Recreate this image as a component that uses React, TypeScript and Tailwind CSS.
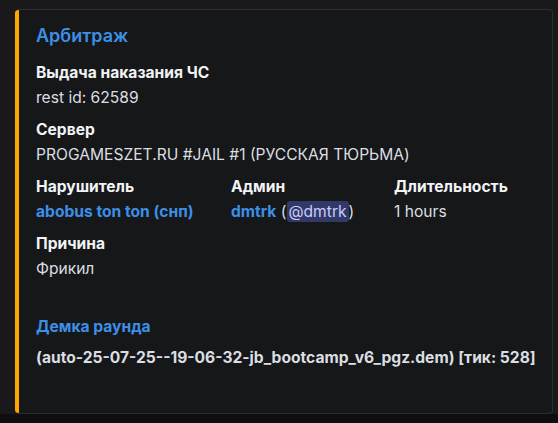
import React from "react";

const font = { fontFamily: 'Inter, "Noto Sans", "Liberation Sans", sans-serif' };

function Field({ name, children }: { name: string; children: React.ReactNode }) {
  return (
    <div className="flex flex-col">
      <div className="h-[25px] leading-[25px] text-[15.6px] font-bold text-[#f2f3f5]">{name}</div>
      <div className="h-[25px] leading-[25px] text-[15.6px] text-[#dbdee1]">{children}</div>
    </div>
  );
}

export default function App() {
  return (
    <div className="w-[558px] h-[423px] bg-[#0e0e10] overflow-hidden" style={font}>
      <div className="h-[414px] bg-[#19191c] pt-[9px] pl-[15px] pr-[5px]">
        <div className="flex h-[405px] rounded-[4px] overflow-hidden border border-[#2c2d31] border-l-0 bg-[#161719]">
          <div className="w-[4px] bg-[#ffa500] shrink-0" />
          <div className="flex flex-col pl-[17px] pt-[14px]">
            <div className="h-[24px] leading-[24px] text-[18px] font-semibold text-[#3d8fe6]">Арбитраж</div>
            <div className="mt-[12px] flex flex-col gap-[7px]">
              <Field name="Выдача наказания ЧС">rest id: 62589</Field>
              <Field name="Сервер">PROGAMESZET.RU #JAIL #1 (РУССКАЯ ТЮРЬМА)</Field>
              <div className="flex">
                <div className="w-[195px]">
                  <Field name="Нарушитель">
                    <span className="font-bold text-[#3d8fe6]">abobus ton ton (снп)</span>
                  </Field>
                </div>
                <div className="w-[163px]">
                  <Field name="Админ">
                    <span className="font-bold text-[#3d8fe6]">dmtrk</span>{" "}
                    (<span className="rounded-[3px] bg-[#323868] px-[2px] py-[1px] text-[#c9cdfb]">@dmtrk</span>)
                  </Field>
                </div>
                <div>
                  <Field name="Длительность">1 hours</Field>
                </div>
              </div>
              <Field name="Причина">Фрикил</Field>
            </div>
            <div className="mt-[33px] h-[25px] leading-[25px] text-[15.6px] font-bold text-[#3d8fe6]">Демка раунда</div>
            <div className="mt-[6px] h-[25px] leading-[25px] text-[15.6px] font-bold text-[#dbdee1]">
              (auto-25-07-25--19-06-32-jb_bootcamp_v6_pgz.dem) [тик: 528]
            </div>
          </div>
        </div>
      </div>
    </div>
  );
}
